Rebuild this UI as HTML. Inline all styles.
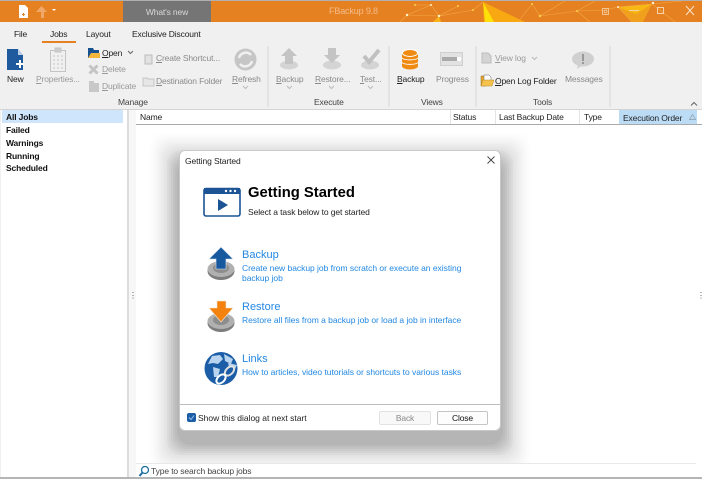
<!DOCTYPE html>
<html><head><meta charset="utf-8"><style>
html,body{margin:0;padding:0}
body{width:702px;height:479px;overflow:hidden;position:relative;background:#f0f0f0;font-family:"Liberation Sans",sans-serif;font-size:8.5px;letter-spacing:-.15px;color:#222}
.t{position:absolute;white-space:nowrap;line-height:12px}
.d{color:#9a9a9a}
.a{position:absolute}
.l{color:#2388e3;letter-spacing:-.03px}
.h{font-size:11px;line-height:14px;letter-spacing:0}
.b{font-weight:bold;color:#111}
.s{position:absolute;border-radius:14px;background:rgba(0,0,0,.015)}
.s2{background:rgba(0,0,0,.035)}
u{text-decoration:underline}
</style></head><body>
<!-- title bar -->
<div class="a" style="left:0;top:0;width:702px;height:1px;background:#b0b0b0"></div>
<div class="a" style="left:0;top:1px;width:702px;height:21px;background:#e68122"></div>
<svg class="a" style="left:400px;top:1px" width="302" height="21" viewBox="0 0 302 21">
<path d="M83 1L125 21H84Z" fill="#f8a811"/>
<path d="M83 1L94 21H85Z" fill="#ffe008"/>
<path d="M218 6L252 3L243 21H232Z" fill="#f0a01c"/>
<path d="M218 6L252 3L236 13Z" fill="#f7b814"/>
<path d="M33 21L39 15L41 21Z" fill="#f8b21a"/>
<path d="M7 14L31 4L39 15L73 9L83 1M7 14L0 21M31 4L15 4M39 15L7 14M58 5L39 15M132 3L140 15L165 0M132 3L118 21M140 15L177 10L205 9L218 6L252 3M177 10L195 0M177 10L190 21M218 6L232 21M252 3L275 21M252 3L282 0" stroke="#f3a744" stroke-width=".6" fill="none"/>
<g fill="#fff3c8"><circle cx="7" cy="14" r="1.200"/><circle cx="31" cy="4" r="1"/><circle cx="39" cy="15" r="1.200"/></g>
<g fill="#fbd24a"><circle cx="15" cy="4" r="1"/><circle cx="58" cy="5" r="1"/><circle cx="73" cy="9" r="1"/><circle cx="132" cy="3" r="1"/><circle cx="140" cy="15" r="1.200"/><circle cx="177" cy="10" r="1"/></g>
<g fill="#fff0d0"><circle cx="218" cy="6" r="1"/><circle cx="253" cy="2" r="1.200"/></g>
</svg>
<div class="a" style="left:123px;top:1px;width:88px;height:21px;background:#757575"></div>
<div class="t" style="left:123px;width:88px;text-align:center;top:6px;color:#d8d8d8">What's new</div>
<div class="t" style="left:329px;top:5px;color:#f2bb8a;font-size:9px">FBackup 9.8</div>
<svg class="a" style="left:18px;top:4px" width="50" height="15" viewBox="0 0 50 15">
<path d="M1 1H7L10 4V14H1Z" fill="#fff"/><path d="M4 10.500H7M5.500 9V12" stroke="#e68122"/>
<path d="M23 8L18 8L23.500 2L29 8L26 8V14H23Z" fill="#f0a868"/>
<path d="M34 5H38L36 7Z" fill="#fff"/>
</svg>
<svg class="a" style="left:600px;top:3px" width="102" height="17" viewBox="0 0 102 17" fill="none" stroke="#f6d2ac">
<rect x="2.500" y="5.500" width="6" height="6" stroke-width=".8"/><circle cx="5.500" cy="8.500" r="1.500" stroke-width=".7"/>
<path d="M29 7.500H39"/><rect x="57.500" y="4.500" width="6" height="6"/>
<path d="M86 3L94 12M94 3L86 12" stroke="#f8e2cc"/>
</svg>
<!-- tabs -->
<div class="t" style="left:14px;top:28px">File</div>
<div class="t" style="left:50px;top:28px">Jobs</div>
<div class="a" style="left:42px;top:41px;width:34px;height:2px;background:#e68122"></div>
<div class="t" style="left:86px;top:28px">Layout</div>
<div class="t" style="left:132px;top:28px">Exclusive Discount</div>
<!-- ribbon: Manage -->
<svg class="a" style="left:6px;top:48px" width="20" height="24" viewBox="0 0 20 24"><path d="M1 1H12L17 7V22H1Z" fill="#1f5a9e"/><path d="M12 1L17 7H12Z" fill="#b9cfe6"/><path d="M10 16H18M14 12V20" stroke="#fff" stroke-width="2"/></svg>
<div class="t" style="left:7px;top:73px">New</div>
<svg class="a" style="left:49px;top:47px" width="18" height="26" viewBox="0 0 18 26" fill="#f0f0f0" stroke="#c4c4c4"><rect x="1.500" y="3.500" width="15" height="21"/><rect x="6" y="1" width="6" height="4" fill="#ccc"/><path d="M4 9H14M4 13H14M4 17H14M4 21H14" stroke-dasharray="2 2"/></svg>
<div class="t d" style="left:36px;top:73px"><u>P</u>roperties...</div>
<svg class="a" style="left:87px;top:47px" width="13" height="12" viewBox="0 0 13 12"><path d="M1 1H6L7 3H12V11H1Z" fill="#17508f"/><path d="M1 11L4 6H13V11Z" fill="#f3b53c"/></svg>
<div class="t" style="left:102px;top:47px"><u>O</u>pen</div>
<svg class="a" style="left:127px;top:50px" width="7" height="5"><path d="M1 1L3.500 3.500L6 1" stroke="#666" fill="none"/></svg>
<svg class="a" style="left:88px;top:64px" width="11" height="11"><path d="M1.500 1.500L9.500 9.500M9.500 1.500L1.500 9.500" stroke="#c4c4c4" stroke-width="3"/></svg>
<div class="t d" style="left:102px;top:63px"><u>D</u>elete</div>
<svg class="a" style="left:88px;top:80px" width="12" height="13"><path d="M1 1H6V12H1ZM6 3H11V12H6Z" fill="#c8c8c8"/></svg>
<div class="t d" style="left:102px;top:80px"><u>D</u>uplicate</div>
<svg class="a" style="left:143px;top:53px" width="11" height="12"><path d="M2 2H9V11H2Z" fill="#e2e2e2" stroke="#bbb"/></svg>
<div class="t d" style="left:156px;top:52px;color:#8a8a8a"><u>C</u>reate Shortcut...</div>
<svg class="a" style="left:142px;top:76px" width="13" height="11"><path d="M1 2H5L6 3H12V10H1Z" fill="#e6e6e6" stroke="#c6c6c6"/></svg>
<div class="t d" style="left:156px;top:75px;color:#8a8a8a"><u>D</u>estination Folder</div>
<div class="t" style="left:118px;top:96px;color:#444">Manage</div>
<svg class="a" style="left:234px;top:48px" width="23" height="23" viewBox="0 0 23 23"><circle cx="11.500" cy="11.500" r="11" fill="#c6c6c6"/><path d="M5 10A7 7 0 0 1 17 7M18 13A7 7 0 0 1 6 16" stroke="#f0f0f0" stroke-width="2.500" fill="none"/></svg>
<div class="t d" style="left:232px;top:73px;color:#8a8a8a"><u>R</u>efresh</div>
<svg class="a" style="left:242px;top:85px" width="7" height="5"><path d="M1 1L3.500 3.500L6 1" stroke="#bbb" fill="none"/></svg>
<div class="a" style="left:267px;top:46px;width:2px;height:61px;background:#e3e3e3"></div>
<!-- execute -->
<svg class="a" style="left:278px;top:48px" width="22" height="22" viewBox="0 0 22 22"><ellipse cx="11" cy="17" rx="9" ry="4.500" fill="#d4d4d4"/><path d="M11 0L19 8H15V16H7V8H3Z" fill="#c4c4c4"/></svg>
<div class="t d" style="left:276px;top:73px;color:#8a8a8a"><u>B</u>ackup</div>
<svg class="a" style="left:286px;top:85px" width="7" height="5"><path d="M1 1L3.500 3.500L6 1" stroke="#bbb" fill="none"/></svg>
<svg class="a" style="left:321px;top:48px" width="22" height="22" viewBox="0 0 22 22"><ellipse cx="11" cy="17" rx="9" ry="4.500" fill="#d4d4d4"/><path d="M7 0H15V7H19L11 15L3 7H7Z" fill="#c4c4c4"/></svg>
<div class="t d" style="left:315px;top:73px;color:#8a8a8a"><u>R</u>estore...</div>
<svg class="a" style="left:328px;top:85px" width="7" height="5"><path d="M1 1L3.500 3.500L6 1" stroke="#bbb" fill="none"/></svg>
<svg class="a" style="left:359px;top:48px" width="22" height="22" viewBox="0 0 22 22"><ellipse cx="11" cy="17" rx="9" ry="4.500" fill="#d4d4d4"/><path d="M5 8L10 14L20 2" stroke="#c0c0c0" stroke-width="4" fill="none"/></svg>
<div class="t d" style="left:360px;top:73px;color:#8a8a8a"><u>T</u>est...</div>
<svg class="a" style="left:367px;top:85px" width="7" height="5"><path d="M1 1L3.500 3.500L6 1" stroke="#bbb" fill="none"/></svg>
<div class="t" style="left:314px;top:96px;color:#444">Execute</div>
<div class="a" style="left:388px;top:46px;width:2px;height:61px;background:#e3e3e3"></div>
<!-- views -->
<svg class="a" style="left:401px;top:49px" width="18" height="21" viewBox="0 0 18 21"><path d="M1 4V17C1 19 5 20.500 9 20.500S17 19 17 17V4Z" fill="#ef8a12"/><path d="M1 9C3 11.500 15 11.500 17 9M1 13.500C3 16 15 16 17 13.500" stroke="#fff" fill="none"/><ellipse cx="9" cy="4" rx="7.500" ry="3.500" fill="#ef8a12" stroke="#fff"/></svg>
<div class="t" style="left:397px;top:73px"><u>B</u>ackup</div>
<svg class="a" style="left:440px;top:52px" width="23" height="15"><rect x=".5" y=".5" width="22" height="13" fill="#e2e2e2" stroke="#cfcfcf"/><rect x="2" y="5" width="15" height="4" fill="#aaa"/><rect x="17" y="5" width="4" height="4" fill="#fff"/></svg>
<div class="t d" style="left:436px;top:73px;color:#8a8a8a">Progress</div>
<div class="t" style="left:421px;top:96px;color:#444">Views</div>
<div class="a" style="left:475px;top:46px;width:2px;height:61px;background:#e3e3e3"></div>
<!-- tools -->
<svg class="a" style="left:481px;top:52px" width="12" height="12"><path d="M1 1H7L10 4V11H1Z" fill="#d4d4d4" stroke="#bbb"/></svg>
<div class="t d" style="left:495px;top:52px"><u>V</u>iew log</div>
<svg class="a" style="left:531px;top:56px" width="7" height="5"><path d="M1 1L3.500 3.500L6 1" stroke="#bbb" fill="none"/></svg>
<svg class="a" style="left:480px;top:74px" width="14" height="13" viewBox="0 0 14 13"><path d="M1 2H5L6 3V12H1Z" fill="#e6a92f" stroke="#8c6a22" stroke-width=".5"/><path d="M4 1H9L11 3V8H4Z" fill="#fff" stroke="#666" stroke-width=".5"/><path d="M1 12L3 6H14L12 12Z" fill="#f5c24e" stroke="#b58a2b" stroke-width=".5"/></svg>
<div class="t" style="left:495px;top:75px"><u>O</u>pen Log Folder</div>
<svg class="a" style="left:572px;top:51px" width="22" height="18" viewBox="0 0 22 18"><ellipse cx="11" cy="8" rx="11" ry="7.500" fill="#d0d0d0"/><path d="M6 13L5 18L11 14Z" fill="#d0d0d0"/><rect x="10" y="3" width="2" height="7" fill="#999"/><rect x="10" y="11" width="2" height="2" fill="#999"/></svg>
<div class="t d" style="left:565px;top:73px;color:#8a8a8a">Messages</div>
<div class="t" style="left:533px;top:96px;color:#444">Tools</div>
<div class="a" style="left:609px;top:46px;width:2px;height:61px;background:#e3e3e3"></div>
<svg class="a" style="left:690px;top:101px" width="8" height="6"><path d="M1 4.500L4 1.500L7 4.500" stroke="#666" fill="none"/></svg>
<!-- body -->
<div class="a" style="left:0;top:109px;width:702px;height:1px;background:#d4d4d4"></div>
<div class="a" style="left:1px;top:110px;width:126px;height:369px;background:#fff"></div>
<div class="a" style="left:2px;top:110px;width:121px;height:13px;background:#cfe5fc"></div>
<div class="t b" style="left:6px;top:111px">All Jobs</div>
<div class="t b" style="left:6px;top:124px">Failed</div>
<div class="t b" style="left:6px;top:137px">Warnings</div>
<div class="t b" style="left:6px;top:150px">Running</div>
<div class="t b" style="left:6px;top:162px">Scheduled</div>
<div class="a" style="left:127px;top:110px;width:2px;height:369px;background:#dcdcdc"></div>
<div class="a" style="left:129px;top:110px;width:7px;height:369px;background:#f7f7f7"></div>
<div class="a" style="left:136px;top:110px;width:566px;height:369px;background:#fff"></div>
<div class="a" style="left:136px;top:124px;width:566px;height:1px;background:#aaa"></div>
<div class="t" style="left:140px;top:111px">Name</div>
<div class="a" style="left:450px;top:110px;width:1px;height:14px;background:#e4e4e4"></div>
<div class="t" style="left:453px;top:111px">Status</div>
<div class="a" style="left:495px;top:110px;width:1px;height:14px;background:#e4e4e4"></div>
<div class="t" style="left:499px;top:111px">Last Backup Date</div>
<div class="a" style="left:579px;top:110px;width:1px;height:14px;background:#e4e4e4"></div>
<div class="t" style="left:584px;top:111px">Type</div>
<div class="a" style="left:619px;top:110px;width:78px;height:14px;background:#bcdcf6"></div>
<div class="t" style="left:623px;top:112px">Execution Order</div>
<svg class="a" style="left:689px;top:114px" width="7" height="6"><path d="M3.500 .5L6.500 5.500H.5Z" fill="none" stroke="#8a9aa8" stroke-width=".7"/></svg>
<div class="a" style="left:129px;top:292px;width:6px;height:8px;color:#555;font-size:8px;line-height:8px">⋮</div>
<div class="a" style="left:697px;top:292px;width:5px;height:8px;color:#555;font-size:8px;line-height:8px">⋮</div>
<!-- dialog shadow -->
<div class="s" style="left:149px;top:132px;width:382px;height:341px;background:rgba(0,0,0,.004)"></div>
<div class="s" style="left:151px;top:134px;width:378px;height:337px;background:rgba(0,0,0,.006)"></div>
<div class="s" style="left:153px;top:136px;width:374px;height:333px;background:rgba(0,0,0,.008)"></div>
<div class="s" style="left:155px;top:138px;width:370px;height:329px;background:rgba(0,0,0,.010)"></div>
<div class="s" style="left:157px;top:140px;width:366px;height:325px;background:rgba(0,0,0,.012)"></div>
<div class="s" style="left:159px;top:142px;width:362px;height:321px"></div>
<div class="s" style="left:161px;top:144px;width:358px;height:317px"></div>
<div class="s" style="left:163px;top:146px;width:354px;height:313px"></div>
<div class="s" style="left:165px;top:148px;width:350px;height:309px"></div>
<div class="s s2" style="left:167px;top:150px;width:346px;height:305px"></div>
<div class="s s2" style="left:169px;top:152px;width:342px;height:301px"></div>
<div class="s s2" style="left:171px;top:154px;width:338px;height:297px"></div>
<div class="s s2" style="left:173px;top:156px;width:334px;height:293px"></div>
<div class="s s2" style="left:175px;top:158px;width:330px;height:289px"></div>
<div class="s s2" style="left:177px;top:160px;width:326px;height:285px"></div>
<!-- search -->
<div class="a" style="left:136px;top:463px;width:560px;height:14px;background:#fff"></div>
<div class="a" style="left:136px;top:463px;width:560px;height:1px;background:#e8e8e8"></div>
<svg class="a" style="left:138px;top:465px" width="12" height="13" viewBox="0 0 12 13"><circle cx="7" cy="5" r="3.500" fill="none" stroke="#1c6f9e" stroke-width="1.300"/><path d="M4.500 7.500L1.500 11" stroke="#1c6f9e" stroke-width="2"/></svg>
<div class="t" style="left:151px;top:465px;color:#444;letter-spacing:-.12px">Type to search backup jobs</div>
<div class="a" style="left:0;top:477px;width:702px;height:2px;background:#b5b5b5"></div>
<!-- dialog -->
<div class="a" style="left:179px;top:150px;width:322px;height:281px;background:#fff;border:1px solid #c8c8c8;box-sizing:border-box;border-radius:6px"></div>
<div class="t" style="left:185px;top:155px;color:#222;letter-spacing:-.1px">Getting Started</div>
<svg class="a" style="left:487px;top:156px" width="8" height="8"><path d="M.5 .5L7.500 7.500M7.500 .5L.5 7.500" stroke="#444" stroke-width=".9"/></svg>
<svg class="a" style="left:203px;top:187px" width="38" height="30" viewBox="0 0 38 30"><rect x="1" y="1.500" width="36" height="27.500" rx="2" fill="#fff" stroke="#1b5394" stroke-width="1.600"/><rect x="1" y="1" width="36" height="6" fill="#1b5394"/><circle cx="23" cy="4" r="1.200" fill="#fff"/><circle cx="27.500" cy="4" r="1.200" fill="#fff"/><circle cx="32" cy="4" r="1.200" fill="#fff"/><path d="M15 12L25 18L15 24Z" fill="#1b5394"/></svg>
<div class="t" style="left:248px;top:184px;font-size:14.800px;font-weight:bold;line-height:18px;color:#000;letter-spacing:0">Getting Started</div>
<div class="t" style="left:248px;top:206px;color:#222;letter-spacing:-.1px">Select a task below to get started</div>
<!-- backup -->
<svg class="a" style="left:207px;top:246px" width="28" height="35" viewBox="0 0 28 35"><ellipse cx="14" cy="25" rx="13.500" ry="9" fill="#7d7d7d"/><ellipse cx="14" cy="23" rx="13.500" ry="8" fill="#b0b0b0"/><ellipse cx="14" cy="22" rx="8" ry="5" fill="#8d8d8d"/><path d="M14 1L26 13H19V23H9V13H2Z" fill="#17599f" stroke="#dfe6ee" stroke-width=".6"/></svg>
<div class="t l h" style="left:242px;top:248px">Backup</div>
<div class="t l" style="left:242px;top:262px">Create new backup job from scratch or execute an existing</div>
<div class="t l" style="left:242px;top:272px">backup job</div>
<!-- restore -->
<svg class="a" style="left:207px;top:300px" width="28" height="33" viewBox="0 0 28 33"><ellipse cx="14" cy="23" rx="13.500" ry="9" fill="#7d7d7d"/><ellipse cx="14" cy="21" rx="13.500" ry="8" fill="#b0b0b0"/><ellipse cx="14" cy="20" rx="8" ry="5" fill="#8d8d8d"/><path d="M10 1H19V8H26L14 22L2 8H10Z" fill="#f4820f" stroke="#f1e3d2" stroke-width=".6"/></svg>
<div class="t l h" style="left:242px;top:300px">Restore</div>
<div class="t l" style="left:242px;top:314px">Restore all files from a backup job or load a job in interface</div>
<!-- links -->
<svg class="a" style="left:204px;top:352px" width="34" height="33" viewBox="0 0 34 33"><circle cx="17" cy="16.500" r="16.500" fill="#1b5da6"/><path d="M8 4L16 3L19 7L14 12L9 11L4 12ZM20 2L29 7L27 12L21 9ZM9 15L16 17L14 25L10 25ZM24 11L33 13L31 17L25 15Z" fill="#b8d4ef"/><path d="M15 29L24 20" stroke="#fff" stroke-width="3"/><ellipse cx="25.500" cy="19" rx="5.500" ry="3.500" fill="#1b5da6" stroke="#e0e0e0" stroke-width="2" transform="rotate(-45 25.500 19)"/><ellipse cx="17" cy="27" rx="5.500" ry="3.500" fill="#1b5da6" stroke="#fff" stroke-width="2" transform="rotate(-45 17 27)"/></svg>
<div class="t l h" style="left:242px;top:352px">Links</div>
<div class="t l" style="left:242px;top:366px">How to articles, video tutorials or shortcuts to various tasks</div>
<!-- footer -->
<div class="a" style="left:180px;top:404px;width:320px;height:1px;background:#bdbdbd"></div>
<div class="a" style="left:187px;top:413px;width:9px;height:9px;background:#1b5da6;border-radius:2px"></div>
<svg class="a" style="left:187px;top:413px" width="9" height="9"><path d="M2 4.500L4 6.500L7 2.500" stroke="#9cc3ec" fill="none"/></svg>
<div class="t" style="left:198px;top:412px;letter-spacing:0">Show this dialog at next start</div>
<div class="a" style="left:379px;top:411px;width:50px;height:12px;border:1px solid #e2e2e2;background:#f8f8f8;border-radius:2px;text-align:center;line-height:12px;color:#888">Back</div>
<div class="a" style="left:437px;top:411px;width:49px;height:12px;border:1px solid #c4c4c4;background:#fdfdfd;border-radius:2px;text-align:center;line-height:12px;color:#111">Close</div>
</body></html>
